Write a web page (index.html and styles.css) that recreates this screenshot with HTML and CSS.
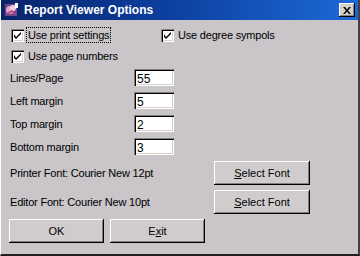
FILE: index.html
```html
<!DOCTYPE html>
<html lang="en">
<head>
    <meta charset="UTF-8">
    <title>Report Viewer Options</title>
    <link rel="stylesheet" href="styles.css">
</head>
<body>

<div class="window">
    <div class="titlebar">
        <svg class="app-icon" width="16" height="16" viewBox="0 0 16 16">
            <rect x="1" y="2" width="12" height="12" fill="#6a4a8a"/>
            <circle cx="6" cy="8" r="4" fill="#e8a0c8"/>
            <circle cx="9" cy="6" r="3" fill="#f0d0e0"/>
            <path d="M3 12 L8 9 L12 13" stroke="#b04080" stroke-width="1.5" fill="none"/>
            <rect x="11" y="1" width="3" height="5" fill="#ffffff"/>
        </svg>
        <span class="title">Report Viewer Options</span>
        <button class="close-btn">
            <svg width="8" height="7" viewBox="0 0 8 7">
                <path d="M0 0h2l2 2.5L6 0h2L5 3.5 8 7H6L4 4.5 2 7H0l3-3.5z" fill="#000"/>
            </svg>
        </button>
    </div>

    <div class="content">
        <div class="check-row">
            <label class="check check-first focused">
                <span class="box"><svg width="7" height="7" viewBox="0 0 7 7"><path d="M0 2v3l2 2 5-5V0L2 5z" fill="#000"/></svg></span>
                <span class="check-text">Use print settings</span>
            </label>
            <label class="check">
                <span class="box"><svg width="7" height="7" viewBox="0 0 7 7"><path d="M0 2v3l2 2 5-5V0L2 5z" fill="#000"/></svg></span>
                <span class="check-text">Use degree sympols</span>
            </label>
        </div>
        <div class="check-row">
            <label class="check check-first">
                <span class="box"><svg width="7" height="7" viewBox="0 0 7 7"><path d="M0 2v3l2 2 5-5V0L2 5z" fill="#000"/></svg></span>
                <span class="check-text">Use page numbers</span>
            </label>
        </div>

        <div class="fields">
            <span class="field-label">Lines/Page</span>
            <input class="field" type="text" value="55">
            <span class="field-label">Left margin</span>
            <input class="field" type="text" value="5">
            <span class="field-label">Top margin</span>
            <input class="field" type="text" value="2">
            <span class="field-label">Bottom margin</span>
            <input class="field" type="text" value="3">
        </div>

        <div class="font-row font-row-first">
            <span class="font-label">Printer Font: Courier New 12pt</span>
            <button class="btn btn-font"><u>S</u>elect Font</button>
        </div>
        <div class="font-row">
            <span class="font-label">Editor Font: Courier New 10pt</span>
            <button class="btn btn-font"><u>S</u>elect Font</button>
        </div>

        <div class="actions">
            <button class="btn btn-action">OK</button>
            <button class="btn btn-action">E<u>x</u>it</button>
        </div>
    </div>
</div>

</body>
</html>
```

FILE: styles.css
```css
body {
    margin: 0;
    font-family: "Liberation Sans", Arial, sans-serif;
    font-size: 11px;
    letter-spacing: -0.2px;
    color: #000;
    background: #c8c4c8;
}

.window {
    width: 360px;
    height: 256px;
    box-sizing: border-box;
    border-left: 1px solid #ffffff;
    border-right: 2px solid #404040;
    border-bottom: 2px solid #202020;
    background: #c9c5c8;
}

.titlebar {
    height: 20px;
    display: flex;
    align-items: center;
    padding-left: 3px;
    background: linear-gradient(90deg, #0a246a 0%, #0c3e9e 45%, #1c6ad6 100%);
}

.app-icon {
    flex: none;
}

.title {
    margin-left: 4px;
    color: #fff;
    font-weight: bold;
    font-size: 12px;
    letter-spacing: 0;
}

.close-btn {
    margin-left: auto;
    margin-right: 3px;
    width: 16px;
    height: 14px;
    padding: 0;
    display: flex;
    align-items: center;
    justify-content: center;
    background: #d4d0c8;
    border: none;
    box-shadow: inset -1px -1px #000, inset 1px 1px #fff, inset -2px -2px #808080;
}

.content {
    padding: 7px 0 0 8px;
}

.check-row {
    display: flex;
    height: 16px;
    margin-bottom: 5px;
}

.check {
    display: flex;
    align-items: center;
}

.check-first {
    width: 150px;
    padding-left: 2px;
}

.box {
    width: 13px;
    height: 13px;
    box-sizing: border-box;
    display: flex;
    align-items: center;
    justify-content: center;
    background: #fff;
    box-shadow: inset 1px 1px #808080, inset 2px 2px #000, inset -1px -1px #fff, inset -2px -2px #d4d0c8;
}

.check-text {
    margin-left: 2px;
    padding: 1px 1px;
    border: 1px dotted transparent;
}

.focused .check-text {
    border-color: #000;
}

.fields {
    display: grid;
    grid-template-columns: 125px 40px;
    grid-auto-rows: 17px;
    row-gap: 6px;
    align-items: center;
}

.field-label {
    padding-left: 1px;
}

.field {
    width: 40px;
    height: 17px;
    box-sizing: border-box;
    padding: 2px 0 0 3px;
    border: none;
    font-family: "Liberation Sans", Arial, sans-serif;
    font-size: 12px;
    background: #fff;
    box-shadow: inset 1px 1px #808080, inset 2px 2px #000, inset -1px -1px #fff, inset -2px -2px #d4d0c8;
}

.font-row {
    display: grid;
    grid-template-columns: 205px 96px;
    align-items: center;
    height: 24px;
    margin-top: 5px;
}

.font-row-first {
    margin-top: 6px;
}

.font-label {
    padding-left: 1px;
}

.btn {
    height: 24px;
    padding: 0;
    border: none;
    font-family: "Liberation Sans", Arial, sans-serif;
    font-size: 11px;
    color: #000;
    background: #d0ccce;
    box-shadow: inset -1px -1px #000, inset 1px 1px #fff, inset -2px -2px #808080;
}

.btn-font {
    width: 96px;
}

.actions {
    display: flex;
    gap: 6px;
    margin-top: 5px;
}

.btn-action {
    width: 95px;
}
```
